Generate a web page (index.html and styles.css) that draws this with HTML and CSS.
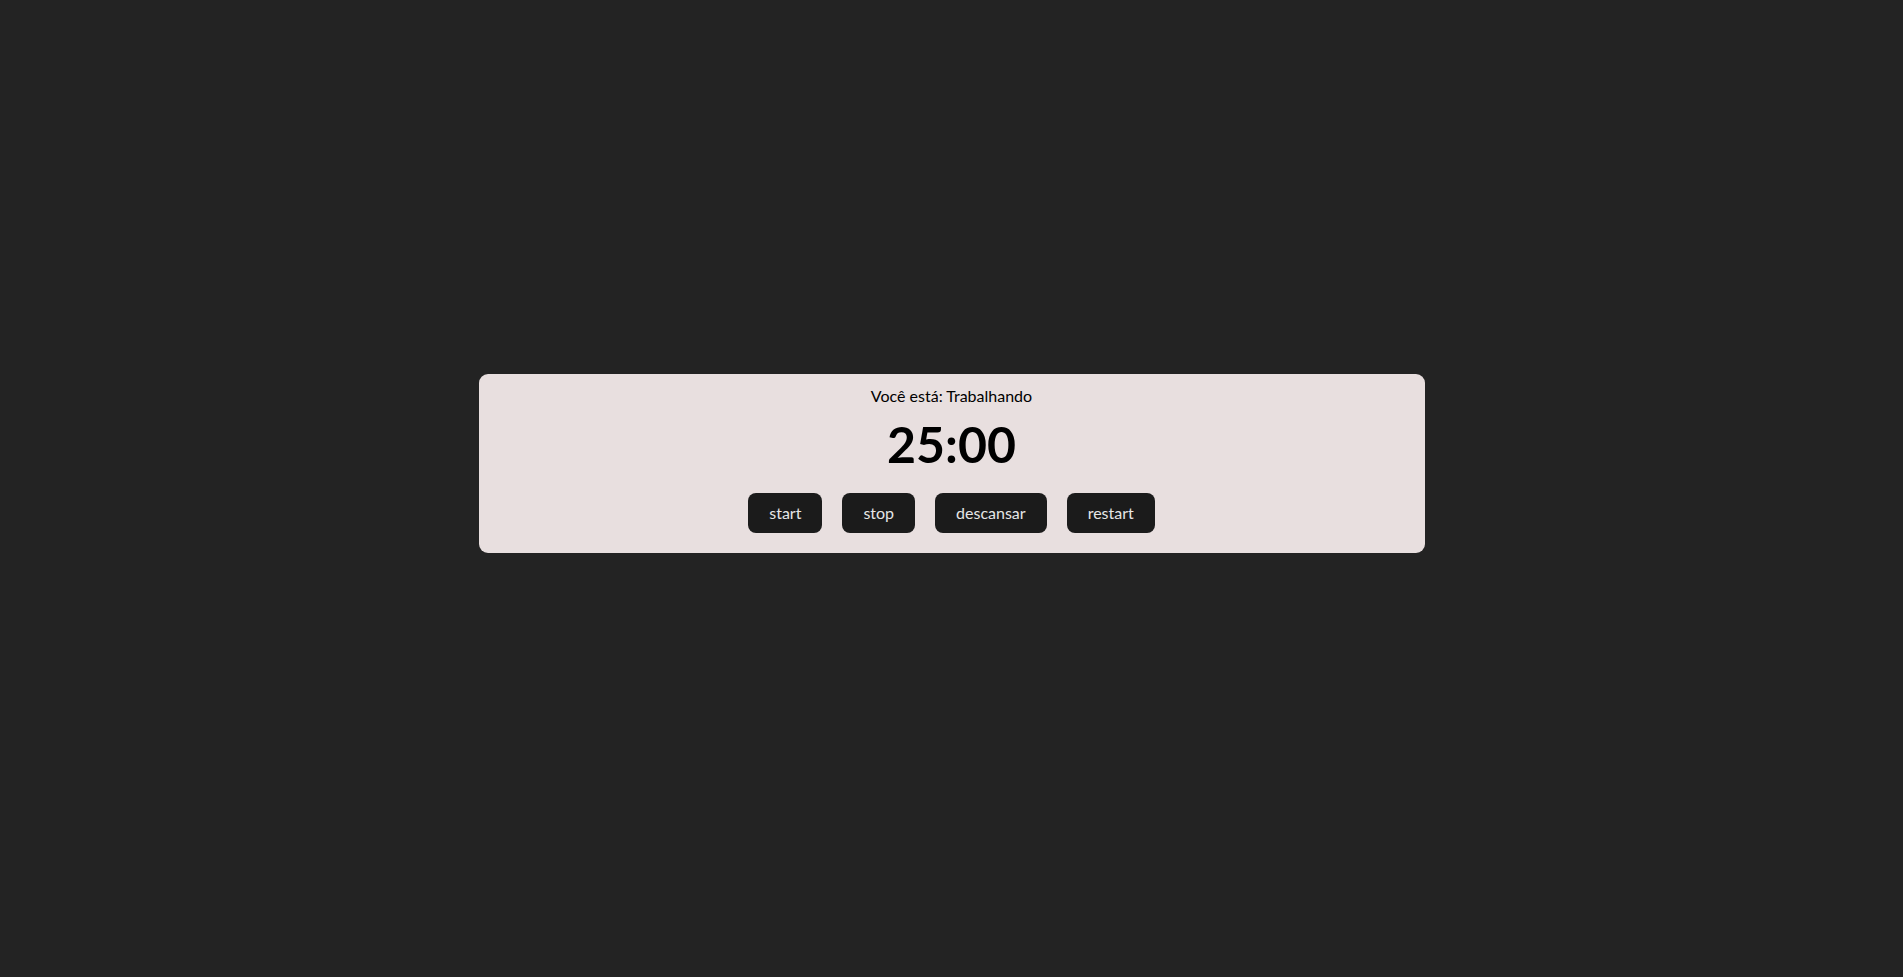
FILE: index.html
```html
<!DOCTYPE html>
<html lang="pt-BR">
<head>
<meta charset="utf-8">
<title>Pomodoro</title>
<link rel="stylesheet" href="styles.css">
</head>
<body>
  <main class="page">
    <section class="card">
      <p class="status">Você está: Trabalhando</p>
      <h1 class="timer">25:00</h1>
      <div class="actions">
        <button class="btn">start</button>
        <button class="btn">stop</button>
        <button class="btn">descansar</button>
        <button class="btn">restart</button>
      </div>
    </section>
  </main>
</body>
</html>
```

FILE: styles.css
```css
* { box-sizing: border-box; }

html, body {
  margin: 0;
  padding: 0;
  background: #232323;
  font-family: Lato, "Noto Sans", "DejaVu Sans", sans-serif;
}

.page {
  min-height: 100vh;
  display: flex;
  flex-direction: column;
  align-items: center;
  padding-top: 374px;
}

.card {
  width: 946px;
  height: 179px;
  background: #e8dfdf;
  border-radius: 9px;
  padding: 12px 0 19px;
  display: flex;
  flex-direction: column;
  align-items: center;
  color: #000;
}

.status {
  margin: 0;
  font-size: 16px;
  line-height: 20px;
}

.timer {
  margin: 10px 0 0;
  font-size: 50px;
  line-height: 56px;
  font-weight: 700;
}

.actions {
  margin-top: 21px;
  display: flex;
  gap: 20px;
}

.btn {
  height: 40px;
  padding: 0 21px;
  border: none;
  border-radius: 8px;
  background: #1b1b1b;
  color: #e6e6e6;
  font-family: inherit;
  font-size: 16px;
  line-height: 20px;
}
```
